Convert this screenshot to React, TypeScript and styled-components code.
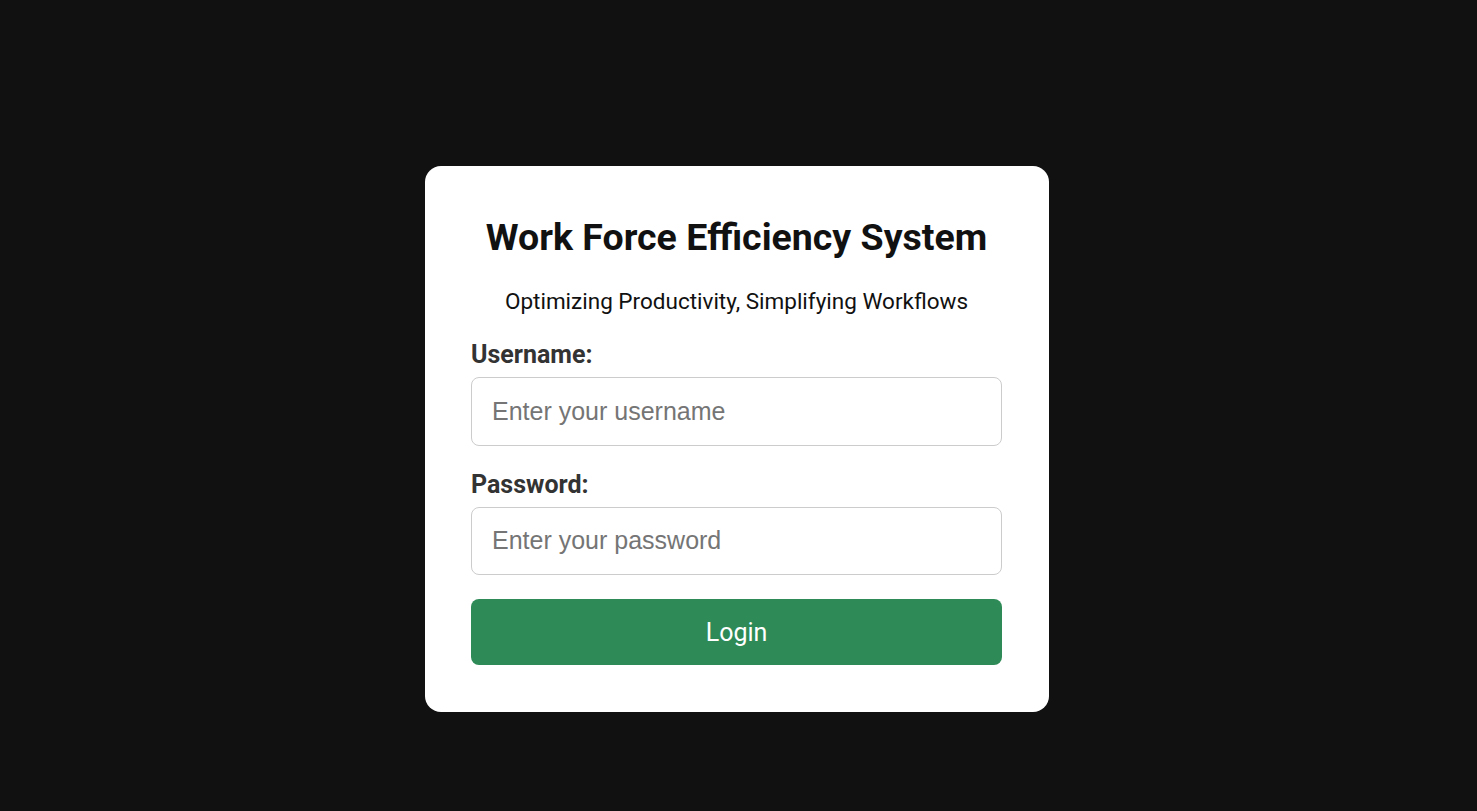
import React from 'react';
import styled, {createGlobalStyle} from 'styled-components';

const GlobalStyle = createGlobalStyle`
  html, body {
    margin: 0;
    padding: 0;
    background: #111111;
    font-family: Roboto, "Liberation Sans", sans-serif;
  }
`;

const Page = styled.div`
  min-height: 811px;
  display: flex;
  justify-content: center;
  align-items: flex-start;
  padding: 166px 3px 0 0;
  box-sizing: border-box;
`;

const Card = styled.div`
  width: 624px;
  box-sizing: border-box;
  background: #ffffff;
  border-radius: 16px;
  padding: 48px 47px 47px 46px;
  display: flex;
  flex-direction: column;
`;

const Title = styled.h1`
  margin: 0;
  font-size: 37.5px;
  line-height: 46px;
  font-weight: 700;
  color: #111111;
  text-align: center;
`;

const Subtitle = styled.p`
  margin: 28px 0 0;
  font-size: 22.5px;
  line-height: 27px;
  color: #111111;
  text-align: center;
`;

const Form = styled.form`
  display: flex;
  flex-direction: column;
  margin-top: 25px;
`;

const Field = styled.div`
  display: flex;
  flex-direction: column;
  margin-bottom: 24px;
`;

const Label = styled.label`
  font-size: 25px;
  line-height: 29px;
  font-weight: 700;
  color: #333333;
  margin-bottom: 8px;
`;

const Input = styled.input`
  font-family: "Liberation Sans", Arial, sans-serif;
  font-size: 25px;
  line-height: 29px;
  padding: 18.75px 20px;
  border: 1px solid #cccccc;
  border-radius: 8px;
  color: #333333;
  outline: none;

  &::placeholder {
    color: #757575;
  }
`;

const Button = styled.button`
  font-family: Roboto, "Liberation Sans", sans-serif;
  font-size: 25px;
  line-height: 29px;
  padding: 18.5px;
  border: none;
  border-radius: 8px;
  background: #2e8b57;
  color: #ffffff;
  cursor: pointer;
`;

export default function App() {
  return (
    <>
      <GlobalStyle />
      <Page>
        <Card>
          <Title>Work Force Efficiency System</Title>
          <Subtitle>Optimizing Productivity, Simplifying Workflows</Subtitle>
          <Form onSubmit={e => e.preventDefault()}>
            <Field>
              <Label htmlFor='username'>Username:</Label>
              <Input id='username' type='text' placeholder='Enter your username' />
            </Field>
            <Field>
              <Label htmlFor='password'>Password:</Label>
              <Input id='password' type='password' placeholder='Enter your password' />
            </Field>
            <Button type='submit'>Login</Button>
          </Form>
        </Card>
      </Page>
    </>
  );
}
